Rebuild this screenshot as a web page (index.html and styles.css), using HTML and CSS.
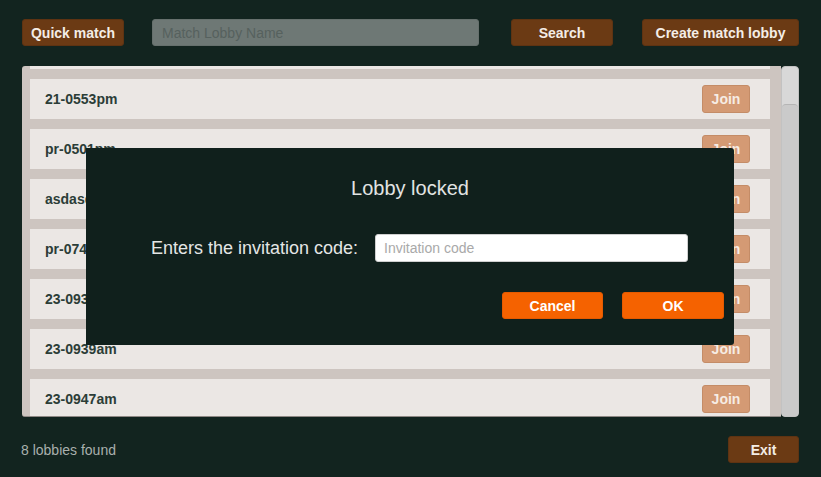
FILE: index.html
```html
<!DOCTYPE html>
<html>
<head>
<meta charset="utf-8">
<link rel="stylesheet" href="styles.css">
</head>
<body>
<div class="screen">
  <div class="topbar">
    <button class="btn brown quick">Quick match</button>
    <input class="search-input" type="text" placeholder="Match Lobby Name">
    <button class="btn brown search">Search</button>
    <button class="btn brown create">Create match lobby</button>
  </div>

  <div class="list-area">
    <div class="panel">
      <div class="rows">
        <div class="row-tail"></div>
        <div class="row"><span class="name">21-0553pm</span><button class="join">Join</button></div>
        <div class="row"><span class="name">pr-0501pm</span><button class="join">Join</button></div>
        <div class="row"><span class="name">asdasd</span><button class="join">Join</button></div>
        <div class="row"><span class="name">pr-0744pm</span><button class="join">Join</button></div>
        <div class="row"><span class="name">23-0933am</span><button class="join">Join</button></div>
        <div class="row"><span class="name">23-0939am</span><button class="join">Join</button></div>
        <div class="row"><span class="name">23-0947am</span><button class="join">Join</button></div>
      </div>
    </div>
    <div class="scrollbar"><div class="thumb"></div></div>
  </div>

  <div class="footer">
    <span class="count">8 lobbies found</span>
    <button class="btn brown exit">Exit</button>
  </div>

  <div class="modal">
    <div class="modal-title">Lobby locked</div>
    <div class="modal-field">
      <label class="modal-label">Enters the invitation code:</label>
      <input class="code-input" type="text" placeholder="Invitation code">
    </div>
    <div class="modal-actions">
      <button class="btn orange cancel">Cancel</button>
      <button class="btn orange ok">OK</button>
    </div>
  </div>
</div>
</body>
</html>
```

FILE: styles.css
```css
* { box-sizing: border-box; }

html, body {
  margin: 0;
  padding: 0;
  background: #12241f;
  font-family: "Liberation Sans", Arial, sans-serif;
}

.screen {
  position: relative;
  width: 821px;
  height: 477px;
  padding: 19px 22px 0 22px;
  overflow: hidden;
}

.btn {
  display: flex;
  align-items: center;
  justify-content: center;
  border: none;
  font-family: "Liberation Sans", Arial, sans-serif;
  font-weight: bold;
  font-size: 14px;
  line-height: 16px;
  color: #f4ede6;
  height: 27px;
  padding: 0;
  border-radius: 3px;
  cursor: pointer;
  white-space: nowrap;
}

.brown {
  background: #6b3a14;
  border: 1px solid #5e3312;
}

.topbar {
  display: flex;
  align-items: center;
  height: 27px;
}

.quick { width: 102px; }

.search-input {
  margin-left: 28px;
  width: 327px;
  height: 27px;
  background: #6e7875;
  border: 1px solid #66706d;
  border-radius: 3px;
  padding: 0 9px;
  font-family: "Liberation Sans", Arial, sans-serif;
  font-size: 14px;
  color: #2c3633;
  outline: none;
}
.search-input::placeholder { color: #56615e; }

.search { margin-left: 32px; width: 102px; }
.create { margin-left: 29px; width: 157px; }

.list-area {
  margin-top: 20px;
  display: flex;
  height: 351px;
}

.panel {
  width: 759px;
  height: 351px;
  background: #cdc5c0;
  border-radius: 3px 0 0 3px;
  padding: 0 11px 0 8px;
  overflow: hidden;
  border-bottom: 1px solid #8e8884;
}

.rows {
  display: flex;
  flex-direction: column;
  gap: 10px;
}

.row-tail {
  height: 3px;
  background: #ebe7e4;
}

.row {
  height: 40px;
  flex-shrink: 0;
  background: #ebe7e4;
  display: flex;
  align-items: center;
  justify-content: space-between;
  padding: 0 20px 0 15px;
}

.name {
  font-weight: bold;
  font-size: 14px;
  color: #2b3d37;
}

.join {
  width: 48px;
  height: 28px;
  background: #d49a74;
  border: 1px solid #c48c67;
  border-radius: 3px;
  font-family: "Liberation Sans", Arial, sans-serif;
  font-weight: bold;
  font-size: 14px;
  color: #f6ece4;
  padding: 0;
}

.scrollbar {
  width: 18px;
  height: 351px;
  background: #d8d8d8;
  border: 1px solid #c2c2c2;
  border-radius: 4px;
  padding-top: 37px;
}

.thumb {
  height: 312px;
  background: #cacaca;
  border-top: 1px solid #b5b5b5;
  border-radius: 4px 4px 3px 3px;
}

.footer {
  margin-top: 19px;
  display: flex;
  align-items: center;
  justify-content: space-between;
  height: 27px;
}

.count {
  margin-left: -1px;
  font-size: 14px;
  color: #a9b0ad;
}

.exit { width: 71px; }

.modal {
  position: absolute;
  left: 86px;
  top: 148px;
  width: 648px;
  height: 197px;
  background: #10201c;
  border-radius: 0 3px 3px 0;
  padding: 28px 10px 0 0;
}

.modal-title {
  text-align: center;
  font-size: 20px;
  line-height: 24px;
  color: #e2e4e3;
  padding-left: 10px;
}

.modal-field {
  margin-top: 34px;
  display: flex;
  align-items: center;
  padding-left: 65px;
  height: 28px;
}

.modal-label {
  font-size: 18px;
  color: #e4e6e5;
  width: 224px;
  white-space: nowrap;
}

.code-input {
  width: 313px;
  height: 28px;
  background: #ffffff;
  border: 1px solid #cfcfcf;
  border-radius: 3px;
  padding: 0 8px;
  font-family: "Liberation Sans", Arial, sans-serif;
  font-size: 14px;
  outline: none;
}
.code-input::placeholder { color: #a9a9a9; }

.modal-actions {
  margin-top: 30px;
  display: flex;
  justify-content: flex-end;
  gap: 19px;
}

.orange {
  background: #f56200;
  border: 1px solid #e45a00;
  color: #ffffff;
}

.cancel { width: 101px; }
.ok { width: 102px; }
```
